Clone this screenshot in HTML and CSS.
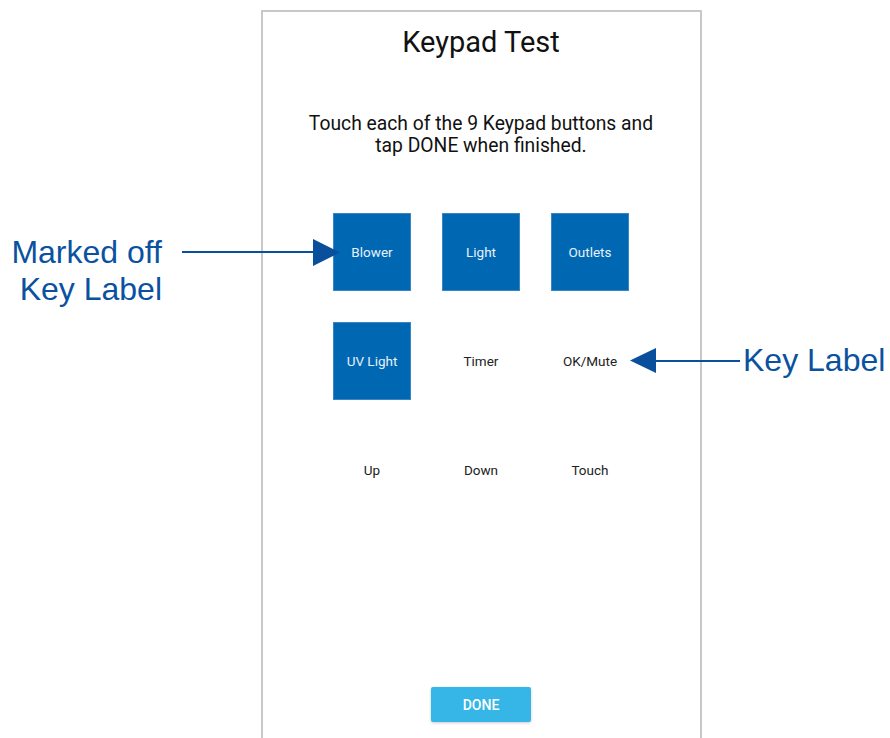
FILE: index.html
```html
<!DOCTYPE html>
<html>

<head>
    <title>Keypad Test</title>
    <link rel="stylesheet" href="styles.css">
</head>

<body>
    <div class="phone">
        <h1 class="title">Keypad Test</h1>
        <p class="hint">Touch each of the 9 Keypad buttons and<br>tap DONE when finished.</p>
        <div class="keys">
            <div class="key marked">Blower</div>
            <div class="key marked">Light</div>
            <div class="key marked">Outlets</div>
            <div class="key marked">UV Light</div>
            <div class="key">Timer</div>
            <div class="key">OK/Mute</div>
            <div class="key">Up</div>
            <div class="key">Down</div>
            <div class="key">Touch</div>
        </div>
        <button class="done">DONE</button>
    </div>

    <div class="note note-left">Marked off<br>Key Label</div>
    <div class="note note-right">Key Label</div>

    <svg class="arrows" width="890" height="738" viewBox="0 0 890 738">
        <line x1="182" y1="252" x2="316" y2="252" stroke="#0a4f9c" stroke-width="2" />
        <polygon points="313,239 340,252.5 313,266" fill="#0a4f9c" />
        <line x1="654" y1="361" x2="740" y2="361" stroke="#0a4f9c" stroke-width="2" />
        <polygon points="656,348 630,360.5 656,373" fill="#0a4f9c" />
    </svg>
</body>
</html>
```

FILE: styles.css
```css
body {
    font-family: Roboto, "Noto Sans", sans-serif;
    background-color: #fff;
    margin: 0;
    padding-top: 10px;
    height: 728px;
    overflow: hidden;
    position: relative;
}

.phone {
    margin-left: 261px;
    width: 436px;
    height: 740px;
    border: 2px solid #c8c8c8;
    border-bottom: none;
    display: flex;
    flex-direction: column;
    align-items: center;
    padding-top: 14px;
    padding-right: 1px;
}

.title {
    margin: 0;
    font-size: 29px;
    line-height: 32px;
    font-weight: 400;
    color: #111;
}

.hint {
    margin: 55px 0 0;
    font-size: 19.3px;
    line-height: 22px;
    text-align: center;
    color: #111;
}

.keys {
    margin-top: 56px;
    display: grid;
    grid-template-columns: repeat(3, 78px);
    grid-auto-rows: 78px;
    gap: 31px;
}

.key {
    display: flex;
    align-items: center;
    justify-content: center;
    font-size: 13.5px;
    color: #222;
}

.key.marked {
    background-color: #0067b2;
    box-shadow: inset 0 0 0 1px #3a86c4;
    color: #e8f1f9;
}

.done {
    margin-top: 178px;
    width: 100px;
    height: 35px;
    border: none;
    border-radius: 2px;
    background-color: #35b6e6;
    color: #fff;
    font-family: Roboto, sans-serif;
    font-size: 14px;
    font-weight: 500;
    box-shadow: 0 1px 3px rgba(0, 0, 0, 0.2);
}

.note {
    position: absolute;
    font-family: "Liberation Sans", Arial, sans-serif;
    font-size: 32px;
    line-height: 37px;
    color: #0a52a0;
}

.note-left {
    left: 0;
    top: 234px;
    width: 162px;
    text-align: right;
}

.note-right {
    left: 743px;
    top: 342px;
}

.arrows {
    position: absolute;
    left: 0;
    top: 0;
    pointer-events: none;
}
```
